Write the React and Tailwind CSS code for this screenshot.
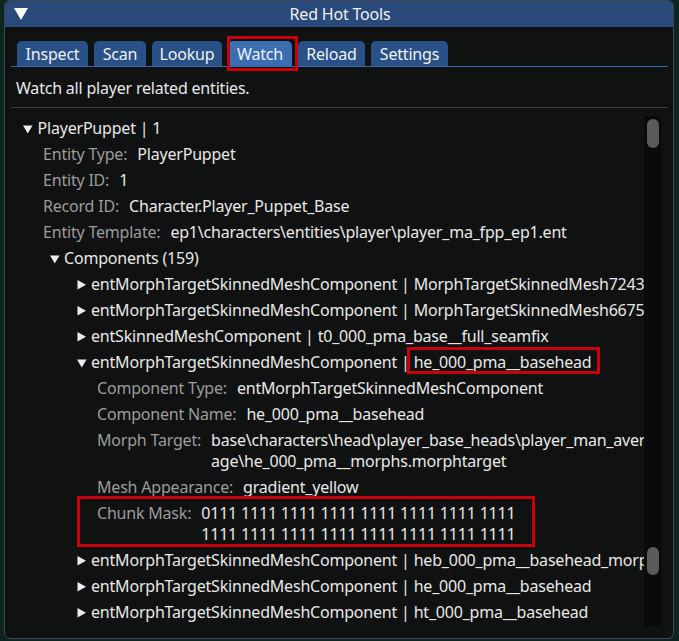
import React from "react";

const FONT = { fontFamily: '"Noto Sans", "Open Sans", sans-serif' };

function Down({ x }) {
  return (
    <svg width="10" height="9" viewBox="0 0 10 9" className="shrink-0" style={{ position: "absolute", left: x, top: 8.5 }}>
      <polygon points="0,0.5 9.5,0.5 4.75,8.5" fill="#ececec" />
    </svg>
  );
}
function Right({ x }) {
  return (
    <svg width="10" height="10" viewBox="0 0 10 10" className="shrink-0" style={{ position: "absolute", left: x, top: 7.5 }}>
      <polygon points="0.5,0 9,4.75 0.5,9.5" fill="#ececec" />
    </svg>
  );
}

function Node({ arrowX, textX, open, children }) {
  return (
    <div className="relative h-[26px] leading-[21px] py-[2px] whitespace-nowrap text-[#e8e8e8]">
      {open ? <Down x={arrowX} /> : <Right x={arrowX} />}
      <div style={{ paddingLeft: textX }}>{children}</div>
    </div>
  );
}

function Field({ x, label, lines }) {
  return (
    <div className="flex leading-[21px] pt-[2px] pb-[3px] whitespace-nowrap" style={{ paddingLeft: x }}>
      <span className="text-[#9c9c9c]">{label}</span>
      <div className="ml-[10px] text-[#e8e8e8] flex flex-col">
        {lines.map((l, i) => (
          <span key={i}>{l}</span>
        ))}
      </div>
    </div>
  );
}

const TABS = [
  ["Inspect", 71],
  ["Scan", 52],
  ["Lookup", 70],
  ["Watch", 64],
  ["Reload", 67],
  ["Settings", 77],
];

export default function App() {
  const L = 11; // tree origin x
  return (
    <div
      className="relative w-[679px] h-[641px] overflow-hidden bg-[#0d2520] text-[16px] tracking-[-0.2px]"
      style={FONT}
    >
      <div className="ml-[4px] w-[670px] h-[639px] border border-[#3d4555] rounded-[6px] overflow-hidden bg-[#101211] flex flex-col">
        {/* title bar */}
        <div className="relative h-[26px] bg-[#294a7a] flex items-center justify-center text-[#f0f0f0] shrink-0">
          <svg width="14" height="12" viewBox="0 0 14 12" className="absolute left-[9px] top-[7px]">
            <polygon points="0,0 14,0 7,12" fill="#ffffff" />
          </svg>
          <span className="leading-none ml-[2px]">Red Hot Tools</span>
        </div>
        {/* tabs */}
        <div className="pl-[6px] pr-[5px] shrink-0">
          <div className="flex gap-[6px] pt-[14px] pl-[6px] border-b border-[#3369ad]">
            {TABS.map(([t, w]) => (
              <div
                key={t}
                className={
                  "h-[25px] rounded-t-[5px] flex items-center justify-center text-[#f0f0f0] " +
                  (t === "Watch" ? "bg-[#3a6eb0]" : "bg-[#2a5088]")
                }
                style={{ width: w }}
              >
                {t}
              </div>
            ))}
          </div>
          <div className="h-[40px] flex items-center pl-[5px] pt-[2px] text-[#e8e8e8]">
            Watch all player related entities.
          </div>
          <div className="h-px bg-[#3d3f44]" />
        </div>
        {/* tree + scrollbar */}
        <div className="flex flex-1 min-h-0 pl-[6px] pt-[8px]">
          <div className="relative w-[633px] overflow-hidden">
            <Node arrowX={23 - L} textX={37.5 - L} open>PlayerPuppet | 1</Node>
            <Field x={43 - L} label="Entity Type:" lines={["PlayerPuppet"]} />
            <Field x={43 - L} label="Entity ID:" lines={["1"]} />
            <Field x={43 - L} label="Record ID:" lines={["Character.Player_Puppet_Base"]} />
            <Field x={43 - L} label="Entity Template:" lines={["ep1\\characters\\entities\\player\\player_ma_fpp_ep1.ent"]} />
            <Node arrowX={50 - L} textX={64 - L} open>Components (159)</Node>
            <Node arrowX={77 - L} textX={91 - L}>entMorphTargetSkinnedMeshComponent | MorphTargetSkinnedMesh7243</Node>
            <Node arrowX={77 - L} textX={91 - L}>entMorphTargetSkinnedMeshComponent | MorphTargetSkinnedMesh6675</Node>
            <Node arrowX={77 - L} textX={91 - L}>entSkinnedMeshComponent | t0_000_pma_base__full_seamfix</Node>
            <Node arrowX={77 - L} textX={91 - L} open>entMorphTargetSkinnedMeshComponent | he_000_pma__basehead</Node>
            <Field x={97 - L} label="Component Type:" lines={["entMorphTargetSkinnedMeshComponent"]} />
            <Field x={97 - L} label="Component Name:" lines={["he_000_pma__basehead"]} />
            <Field
              x={97 - L}
              label="Morph Target:"
              lines={["base\\characters\\head\\player_base_heads\\player_man_aver", "age\\he_000_pma__morphs.morphtarget"]}
            />
            <Field x={97 - L} label="Mesh Appearance:" lines={["gradient_yellow"]} />
            <Field
              x={97 - L}
              label="Chunk Mask:"
              lines={["0111 1111 1111 1111 1111 1111 1111 1111", "1111 1111 1111 1111 1111 1111 1111 1111"]}
            />
            <Node arrowX={77 - L} textX={91 - L}>entMorphTargetSkinnedMeshComponent | heb_000_pma__basehead_morp</Node>
            <Node arrowX={77 - L} textX={91 - L}>entMorphTargetSkinnedMeshComponent | he_000_pma__basehead</Node>
            <Node arrowX={77 - L} textX={91 - L}>entMorphTargetSkinnedMeshComponent | ht_000_pma__basehead</Node>
          </div>
          <div className="relative w-[17px] h-[510px] bg-[#0a0a0a]">
            <div className="absolute left-[3px] top-[3px] w-[12px] h-[29px] rounded-full bg-[#5a5a5a]" />
            <div className="absolute left-[3px] top-[431px] w-[12px] h-[28px] rounded-full bg-[#5a5a5a]" />
          </div>
        </div>
      </div>
      {/* annotation boxes */}
      <div className="absolute left-[227px] top-[36px] w-[71px] h-[35px] border-[3px] border-[#c8000a]" />
      <div className="absolute left-[407px] top-[347px] w-[193px] h-[27px] border-[3px] border-[#c8000a]" />
      <div className="absolute left-[77px] top-[496px] w-[458px] h-[51px] border-[3px] border-[#c8000a]" />
    </div>
  );
}
